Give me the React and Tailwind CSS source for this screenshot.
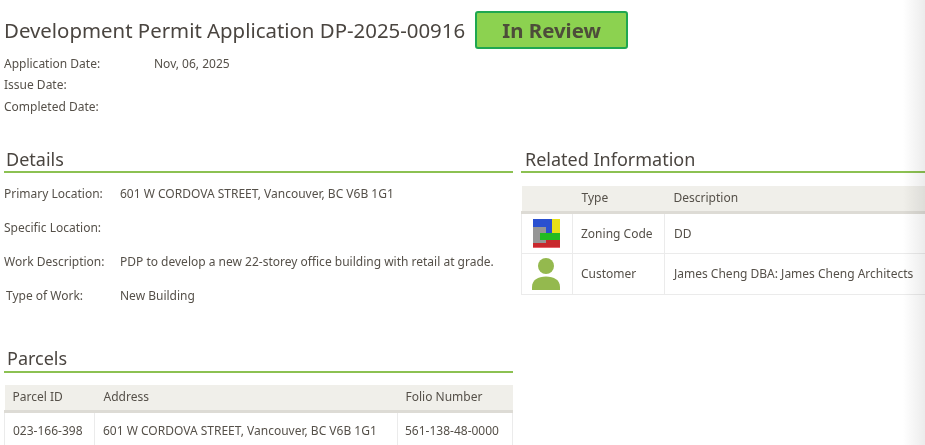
import React from 'react';

function SectionHeading({ children, className = '' }) {
    return (
        <h2 className={`h-[26px] border-b-2 border-[#8cc152] text-[18px] text-[#4a4540] ${className}`}>
            {children}
        </h2>
    );
}

function ZoningIcon() {
    return (
        <svg width="27" height="29" viewBox="0 0 27 29">
            <rect x="0" y="0" width="27" height="29" fill="#c8282d" />
            <rect x="0" y="0" width="19" height="8" fill="#2a50d0" />
            <rect x="13" y="0" width="6" height="14" fill="#2a50d0" />
            <rect x="19" y="0" width="8" height="14" fill="#e6e018" />
            <rect x="0" y="8" width="13" height="16" fill="#969696" />
            <rect x="7" y="14" width="20" height="7" fill="#22bb22" />
            <rect x="0" y="28" width="27" height="1" fill="#e8606a" />
        </svg>
    );
}

function PersonIcon() {
    return (
        <svg width="28" height="32" viewBox="0 0 28 32">
            <circle cx="14" cy="8" r="8" fill="#94b94e" />
            <path d="M0 32 V29 C0 22 6 18.500 14 18.500 C22 18.500 28 22 28 29 V32 Z" fill="#94b94e" />
        </svg>
    );
}

function DetailRow({ label, value }) {
    return (
        <div className="flex h-[34px] items-center">
            <div className="w-[116px] shrink-0">{label}</div>
            <div>{value}</div>
        </div>
    );
}

export default function App() {
    return (
        <div className="relative h-[445px] w-[925px] overflow-hidden bg-white pl-[4px] text-[12px] text-[#555049] font-['Noto_Sans','Open_Sans',sans-serif]">
            <div className="flex items-center pt-[11px]">
                <h1 className="text-[20.400px] leading-[38px] text-[#4a4540]">Development Permit Application DP-2025-00916</h1>
                <div className="ml-[10px] flex h-[38px] w-[153px] items-center justify-center rounded-[3px] border-2 border-[#1fa750] bg-[#8cd250] text-[20.400px] font-bold text-[#4d4d3a]">
                    In Review
                </div>
            </div>

            <div className="mt-[4px]">
                <div className="flex h-[21.500px] items-center">
                    <div className="w-[150px]">Application Date:</div>
                    <div>Nov, 06, 2025</div>
                </div>
                <div className="flex h-[21.500px] items-center">Issue Date:</div>
                <div className="flex h-[21.500px] items-center">Completed Date:</div>
            </div>

            <div className="mt-[29px] flex">
                <div className="w-[509px] shrink-0">
                    <SectionHeading className="pl-[2px] leading-[24px]">Details</SectionHeading>
                    <div className="mt-[4px]">
                        <DetailRow label="Primary Location:" value="601 W CORDOVA STREET, Vancouver, BC V6B 1G1" />
                        <DetailRow label="Specific Location:" value="" />
                        <DetailRow label="Work Description:" value="PDP to develop a new 22-storey office building with retail at grade." />
                        <DetailRow label={<span className="pl-[2px]">Type of Work:</span>} value="New Building" />
                    </div>

                    <SectionHeading className="mt-[34px] pl-[3px] leading-[22px]">Parcels</SectionHeading>
                    <table className="mt-[12px] w-full border-collapse">
                        <thead>
                            <tr className="h-[27px] border-b-[3px] border-[#dddbd5] bg-[#f0efea] text-left">
                                <th className="w-[90px] pl-[8px] font-normal">Parcel ID</th>
                                <th className="w-[303px] pl-[9px] font-normal">Address</th>
                                <th className="pl-[8px] font-normal">Folio Number</th>
                            </tr>
                        </thead>
                        <tbody>
                            <tr className="h-[37px]">
                                <td className="border border-[#ebebeb] pl-[8px]">023-166-398</td>
                                <td className="border border-[#ebebeb] pl-[8px]">601 W CORDOVA STREET, Vancouver, BC V6B 1G1</td>
                                <td className="border border-[#ebebeb] pl-[7px]">561-138-48-0000</td>
                            </tr>
                        </tbody>
                    </table>
                </div>

                <div className="ml-[8px] flex-1">
                    <SectionHeading className="pl-[4px] leading-[24px]">Related Information</SectionHeading>
                    <table className="mt-[13px] w-full border-collapse">
                        <thead>
                            <tr className="h-[27px] border-b-[3px] border-[#dddbd5] bg-[#f0efea] text-left">
                                <th className="w-[51px]" />
                                <th className="w-[92px] pl-[9px] font-normal">Type</th>
                                <th className="pl-[9px] font-normal">Description</th>
                            </tr>
                        </thead>
                        <tbody>
                            <tr className="h-[41px]">
                                <td className="border border-[#ebebeb]">
                                    <div className="flex justify-center pr-[2px]"><ZoningIcon /></div>
                                </td>
                                <td className="border border-[#ebebeb] pl-[8px]">Zoning Code</td>
                                <td className="border-y border-[#ebebeb] pl-[9px]">DD</td>
                            </tr>
                            <tr className="h-[41px]">
                                <td className="border border-[#ebebeb]">
                                    <div className="flex justify-center pr-[2px]"><PersonIcon /></div>
                                </td>
                                <td className="border border-[#ebebeb] pl-[8px]">Customer</td>
                                <td className="border-y border-[#ebebeb] pl-[9px]">James Cheng DBA: James Cheng Architects</td>
                            </tr>
                        </tbody>
                    </table>
                </div>
            </div>

            {/* soft page edge shadow on the right */}
            <div className="absolute inset-y-0 right-0 w-[22px] bg-gradient-to-r from-white to-[#ececec] mix-blend-multiply" />
        </div>
    );
}
